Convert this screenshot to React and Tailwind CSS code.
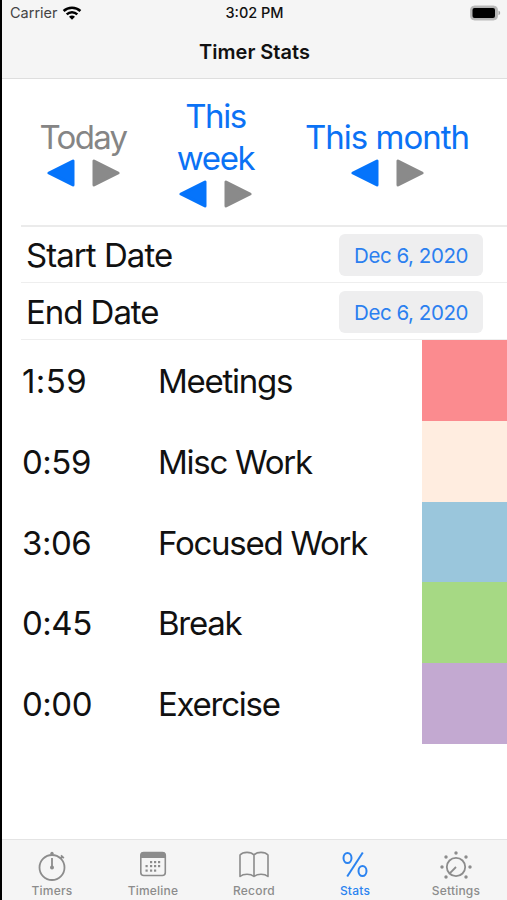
import React from 'react';

const PERIODS = [
  { label: 'Today', width: 'w-[86px]', color: 'text-[#858585]', tracking: 'tracking-[-1.700px]' },
  { label: 'This week', width: 'w-[76px]', color: 'text-[#0b72f5]', tracking: 'tracking-[-1.400px]' },
  { label: 'This month', width: 'w-[164px] whitespace-nowrap', color: 'text-[#0b72f5]', tracking: 'tracking-[-1px]' },
];

const TIMERS = [
  { time: '1:59', name: 'Meetings', color: 'bg-[#fb8b8f]', tracking: 'tracking-[0.400px]' },
  { time: '0:59', name: 'Misc Work', color: 'bg-[#ffede0]', tracking: 'tracking-[-0.500px]' },
  { time: '3:06', name: 'Focused Work', color: 'bg-[#9ac6dc]', tracking: 'tracking-[-0.500px]' },
  { time: '0:45', name: 'Break', color: 'bg-[#a6d984]', tracking: 'tracking-[-0.500px]' },
  { time: '0:00', name: 'Exercise', color: 'bg-[#c3a9d1]', tracking: 'tracking-[-0.500px]' },
];

function WifiIcon() {
  return (
    <svg width="20" height="14" viewBox="0 0 20 14" fill="none" stroke="#000" strokeWidth="2.500">
      <path d="M1.600 5C6.200.6 13.800.6 18.400 5" />
      <path d="M4.700 8.400c3-2.900 7.600-2.900 10.600 0" />
      <path d="M7 10.700c1.700-1.700 4.300-1.700 6 0L10 13.700z" fill="#000" stroke="none" />
    </svg>
  );
}

function BatteryIcon() {
  return (
    <svg width="32" height="16" viewBox="0 0 32 16">
      <rect x="1.500" y="1" width="27" height="14" rx="4" fill="#b4b4b4" stroke="#bcbcbc" strokeWidth="1" />
      <rect x="3.500" y="3" width="22.500" height="10" rx="2" fill="#000" />
      <path d="M29.500 5.800c2.200.6 2.200 3.800 0 4.400z" fill="#a0a0a0" />
    </svg>
  );
}

function Arrow({ direction }) {
  const back = direction === 'back';
  return (
    <svg
      width="28"
      height="28"
      viewBox="0 0 28 28"
      strokeWidth="3"
      strokeLinejoin="round"
      className={back ? 'fill-[#0574fb] stroke-[#0574fb]' : 'fill-[#8a8a8a] stroke-[#8a8a8a]'}
    >
      <path d={back ? 'M2 14L26 2v24z' : 'M26 14L2 2v24z'} />
    </svg>
  );
}

function TimersIcon() {
  return (
    <svg width="30" height="32" viewBox="0 0 30 32" fill="none" stroke="currentColor" strokeWidth="1.800">
      <circle cx="15" cy="17.500" r="12.500" />
      <path d="M15 8v9M15 2.500V5M23.500 8.500l2-2M24 5.300l2.800 2.800" />
      <circle cx="15" cy="17.500" r="2" fill="currentColor" stroke="none" />
      <circle cx="15" cy="3.300" r="1.600" fill="currentColor" stroke="none" />
    </svg>
  );
}

function TimelineIcon() {
  const dots = [
    [12, 11], [16, 11], [20, 11],
    [7.500, 15], [12, 15], [16, 15], [20, 15],
    [7.500, 19.500], [12, 19.500], [16, 19.500],
  ];
  return (
    <svg width="28" height="32" viewBox="0 0 28 32">
      <g transform="translate(0 1)">
        <rect x="1.800" y="1.500" width="24.500" height="23" rx="3" fill="none" stroke="currentColor" strokeWidth="1.600" />
        <path d="M1.500 7V4a3 3 0 0 1 3-3h19a3 3 0 0 1 3 3v3z" fill="currentColor" />
        {dots.map(([x, y]) => (
          <rect key={`${x}-${y}`} x={x - 1} y={y - 1} width="2.200" height="2.200" fill="currentColor" />
        ))}
      </g>
    </svg>
  );
}

function RecordIcon() {
  return (
    <svg width="30" height="32" viewBox="0 0 30 32" fill="none" stroke="currentColor" strokeWidth="1.600" strokeLinejoin="round">
      <path d="M15 5C12 1.500 4 1.500 1 5v21.500c3.500-3 10.500-3 14 0 3.500-3 10.500-3 14 0V5C26 1.500 18 1.500 15 5zM15 5v21.500" />
    </svg>
  );
}

function StatsIcon() {
  return (
    <svg width="26" height="32" viewBox="0 0 26 32" fill="none" stroke="currentColor" strokeWidth="2">
      <ellipse cx="5.500" cy="8" rx="4" ry="5" />
      <ellipse cx="20.500" cy="21" rx="4" ry="5" />
      <path d="M20.800 2.500L5.200 26.500" />
    </svg>
  );
}

function SettingsIcon() {
  const dots = [[16, 3], [6, 7], [26, 7], [2, 17], [30, 17], [6, 27], [26, 27]];
  return (
    <svg width="32" height="32" viewBox="0 0 32 32" fill="none" stroke="currentColor" strokeWidth="1.800">
      <circle cx="16" cy="17" r="9.200" />
      <path d="M16 17l-6.300 6.300" />
      {dots.map(([x, y]) => (
        <circle key={`${x}-${y}`} cx={x} cy={y} r="1.700" fill="currentColor" stroke="none" />
      ))}
    </svg>
  );
}

const TABS = [
  { label: 'Timers', Icon: TimersIcon },
  { label: 'Timeline', Icon: TimelineIcon },
  { label: 'Record', Icon: RecordIcon },
  { label: 'Stats', Icon: StatsIcon, active: true },
  { label: 'Settings', Icon: SettingsIcon },
];

function DateRow({ label, size, tracking }) {
  return (
    <div className={`ml-[19px] flex shrink-0 items-center justify-between border-b border-[#eeeeee] pr-6 pl-[5px] ${size}`}>
      <span className={`pt-0.5 text-[33px] ${tracking}`}>{label}</span>
      <button className="h-[42px] w-[144px] rounded-md bg-[#eeeeef] pt-[3px] text-[20.500px] tracking-[-0.450px] whitespace-nowrap text-[#2b7ff0]">
        Dec 6, 2020
      </button>
    </div>
  );
}

export default function App() {
  return (
    <div className="flex h-[900px] w-[507px] flex-col overflow-hidden border-l-2 border-black bg-white font-['Inter',sans-serif] text-[#111111]">
      <header className="h-[79px] shrink-0 border-b border-[#dedede] bg-[#f5f5f5]">
        <div className="grid h-[25px] grid-cols-3 items-center pr-[6px] pl-2 text-[14.500px]">
          <div className="flex items-center gap-1 text-[#444444]">
            Carrier
            <WifiIcon />
          </div>
          <div className="pr-[2px] text-center font-medium">3:02 PM</div>
          <div className="flex justify-end">
            <BatteryIcon />
          </div>
        </div>
        <h1 className="pt-[12px] text-center text-[20px] leading-[30px] font-semibold">Timer Stats</h1>
      </header>

      <section className="ml-[19px] flex h-[148px] shrink-0 items-center justify-between border-b-2 border-[#ebebeb] pt-[3px] pr-[38px] pl-[19px]">
        {PERIODS.map(({ label, width, color, tracking }) => (
          <div key={label} className={`flex flex-col items-center ${width}`}>
            <button className={`text-center text-[33px] leading-[41.500px] ${color} ${tracking}`}>{label}</button>
            <div className="flex h-8 items-start gap-[17px] pt-px">
              <Arrow direction="back" />
              <Arrow direction="forward" />
            </div>
          </div>
        ))}
      </section>

      <DateRow label="Start Date" size="h-[56px] pt-px" tracking="tracking-[-0.950px]" />
      <DateRow label="End Date" size="h-[57px] pt-0.5" tracking="tracking-[-1.050px]" />

      <ul>
        {TIMERS.map(({ time, name, color, tracking }) => (
          <li key={name} className="flex h-[80.750px] items-stretch text-[33px]">
            <span className={`flex w-[156px] items-center pt-[3px] pl-5 ${tracking}`}>{time}</span>
            <span className="flex flex-1 items-center pt-[3px] tracking-[-1.250px]">{name}</span>
            <span className={`w-[85px] ${color}`} />
          </li>
        ))}
      </ul>

      <nav className="mt-auto grid h-[61px] shrink-0 grid-cols-5 border-t border-[#e4e4e4] bg-[#f5f5f5]">
        {TABS.map(({ label, Icon, active }) => (
          <button
            key={label}
            className={`flex flex-col items-center pt-[10px] pr-px text-[12px] font-medium tracking-[0.200px] ${active ? 'text-[#2b83f0]' : 'text-[#8c8c8c]'}`}
          >
            <Icon />
            <span className="leading-[18px]">{label}</span>
          </button>
        ))}
      </nav>
    </div>
  );
}
